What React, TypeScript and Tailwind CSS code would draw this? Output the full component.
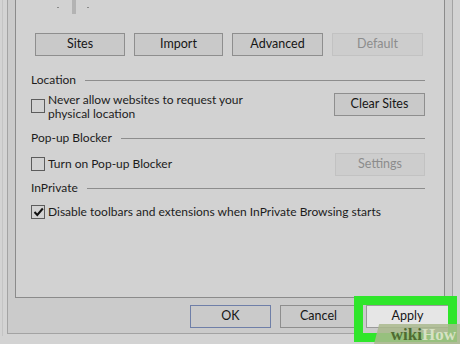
import React from 'react';

const font = { fontFamily: 'Lato, "Noto Sans", Arial, sans-serif' };

function Btn({ label, w, disabled, focus }: { label: string; w: string; disabled?: boolean; focus?: boolean }) {
    return (
        <div
            className={`${w} h-[23px] flex items-center justify-center text-[12.5px] border ${
                disabled
                    ? 'border-[#c2c2c2] bg-[#cdcdcd] text-[#8c8c8c]'
                    : focus
                      ? 'border-[#6f7fa8] bg-[#cacaca] text-[#161616]'
                      : 'border-[#8e8e8e] bg-[#c9c9c9] text-[#161616]'
            }`}
        >
            {label}
        </div>
    );
}

function Header({ label }: { label: string }) {
    return (
        <div className="flex items-center h-[16px] text-[12px] leading-[16px] text-[#1c1c1c]">
            <span>{label}</span>
            <div className="flex-1 ml-[9px] h-px bg-[#8d8d8d]" />
        </div>
    );
}

function Box({ checked }: { checked?: boolean }) {
    return (
        <div className="w-[14px] h-[14px] shrink-0 border border-[#5c5c5c] bg-[#d2d2d2] flex items-center justify-center">
            {checked && (
                <svg width="11" height="10" viewBox="0 0 11 10">
                    <path d="M1.5 5 L4.3 8 L9.8 1.5" fill="none" stroke="#111" strokeWidth="2" />
                </svg>
            )}
        </div>
    );
}

export default function App() {
    return (
        <div className="relative w-[460px] h-[344px] overflow-hidden bg-[#d3d3d3]" style={font}>
            <div className="ml-[2px] w-[452px] h-[336px] border-l border-[#c4c4c4]">
                <div className="ml-[4px] w-[446px] h-[334px] flex flex-col border-l border-r border-b border-[#a3a3a3] bg-[#cbcbcb]">
                    <div className="ml-[7px] mr-[7px] h-[298px] border-l border-r border-b border-[#8b8b8b] bg-[#d2d2d2] pl-[15px] pr-[19px]">
                        {/* slider remains */}
                        <div className="relative h-[33px]">
                            <div className="absolute left-[41px] top-0 w-[4px] h-[14px] bg-[#b3b3b3]" />
                            <div className="absolute left-[26px] top-[7px] w-[2px] h-px bg-[#8a8a8a]" />
                            <div className="absolute left-[56px] top-[7px] w-[2px] h-px bg-[#8a8a8a]" />
                        </div>
                        <div className="flex pl-[4px] gap-[9px]">
                            <Btn label="Sites" w="w-[90px]" />
                            <Btn label="Import" w="w-[89px]" />
                            <Btn label="Advanced" w="w-[91px]" />
                            <Btn label="Default" w="w-[91px]" disabled />
                        </div>
                        <div className="mt-[16px]">
                            <Header label="Location" />
                        </div>
                        <div className="mt-[5px] flex justify-between">
                            <div className="flex items-start">
                                <div className="mt-[6px]">
                                    <Box />
                                </div>
                                <div className="ml-[3px] text-[12px] leading-[14px] text-[#1c1c1c] whitespace-nowrap">
                                    Never allow websites to request your
                                    <br />
                                    physical location
                                </div>
                            </div>
                            <Btn label="Clear Sites" w="w-[91px]" />
                        </div>
                        <div className="mt-[9px]">
                            <Header label="Pop-up Blocker" />
                        </div>
                        <div className="mt-[7px] flex items-center justify-between h-[22px]">
                            <div className="flex items-center">
                                <Box />
                                <span className="ml-[3px] text-[12px] leading-[14px] text-[#1c1c1c]">Turn on Pop-up Blocker</span>
                            </div>
                            <Btn label="Settings" w="w-[90px]" disabled />
                        </div>
                        <div className="mt-[5px]">
                            <Header label="InPrivate" />
                        </div>
                        <div className="mt-[8px] flex items-center h-[15px]">
                            <Box checked />
                            <span className="ml-[3px] text-[12px] leading-[14px] text-[#1c1c1c] whitespace-nowrap">
                                Disable toolbars and extensions when InPrivate Browsing starts
                            </span>
                        </div>
                    </div>
                    <div className="mt-[7px] flex justify-end pr-[3px] gap-[9px]">
                        <Btn label="OK" w="w-[81px]" focus />
                        <Btn label="Cancel" w="w-[77px]" />
                        <div className="w-[83px] h-[23px] flex items-center justify-center text-[12.5px] border border-[#9a9a9a] bg-[#e6e6e6] text-[#161616]">
                            Apply
                        </div>
                    </div>
                </div>
            </div>

            {/* highlight */}
            <div className="absolute left-[354px] top-[296px] w-[103px] h-[46px] border-[9px] border-[#2fe62b]" />

            {/* watermark */}
            <div className="absolute right-0 bottom-0 w-[86px] h-[20px] bg-[#a9b98d]/85 [clip-path:polygon(6%_0,100%_0,100%_100%,0_100%)] flex items-center justify-end pr-[4px]">
                <span className="text-[17px] font-bold leading-none" style={{ fontFamily: '"Liberation Serif", serif' }}>
                    <span className="text-[#4f6b32]">wiki</span>
                    <span className="text-[#d6e2c4]">How</span>
                </span>
            </div>
        </div>
    );
}
